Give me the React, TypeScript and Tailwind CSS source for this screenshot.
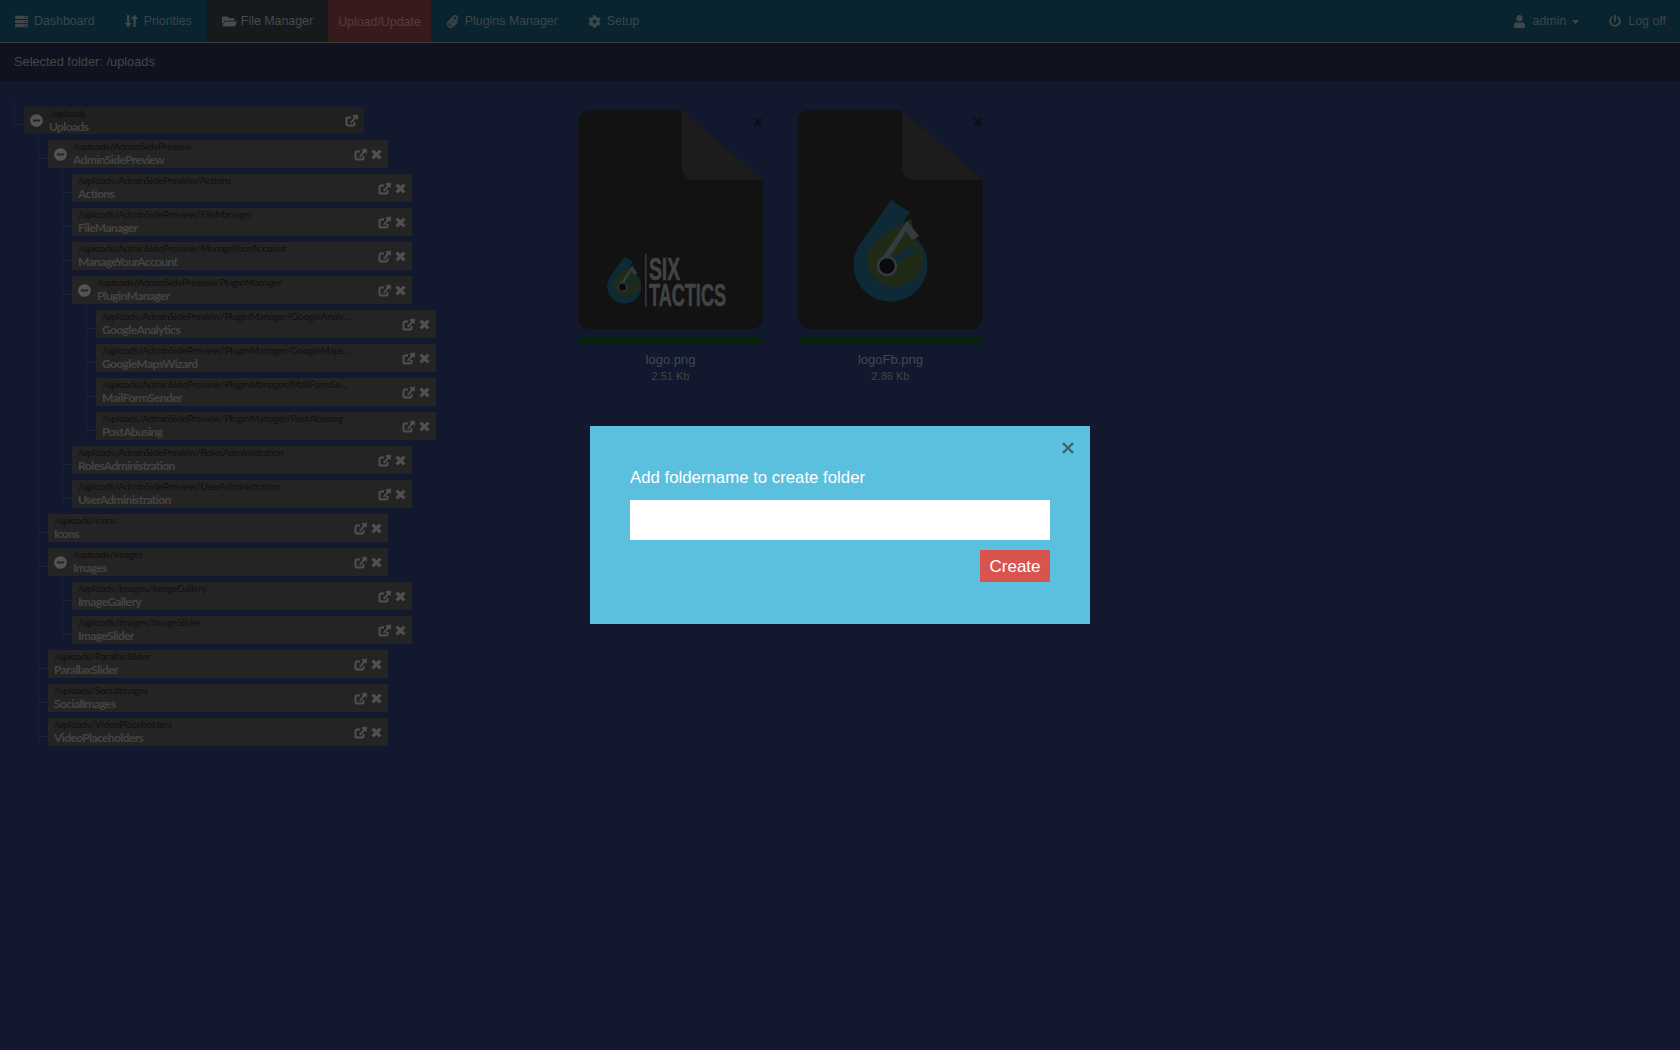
import React from "react";
import { FaServer, FaFolderOpen, FaPaperclip, FaCog, FaUser, FaPowerOff, FaMinusCircle } from "react-icons/fa";

type Node = { name: string; path: string; root?: boolean; kids?: Node[] };

const mk = (path: string, kids?: Node[]): Node => ({ name: path.split("/").pop() as string, path, kids });
const A = "/uploads/AdminSidePreview";
const P = A + "/PluginManager";
const tree: Node = {
  name: "Uploads",
  path: "/uploads",
  root: true,
  kids: [
    mk(A, [
      mk(A + "/Actions"),
      mk(A + "/FileManager"),
      mk(A + "/ManageYourAccount"),
      mk(P, [mk(P + "/GoogleAnalytics"), mk(P + "/GoogleMapsWizard"), mk(P + "/MailFormSender"), mk(P + "/PostAbusing")]),
      mk(A + "/RolesAdministration"),
      mk(A + "/UserAdministration"),
    ]),
    mk("/uploads/Icons"),
    mk("/uploads/Images", [mk("/uploads/Images/ImageGallery"), mk("/uploads/Images/ImageSlider")]),
    mk("/uploads/ParallaxSlider"),
    mk("/uploads/SocialImages"),
    mk("/uploads/VideoPlaceholders"),
  ],
};

function SortIcon() {
  return (
    <svg width="13" height="14" viewBox="0 0 13 14" fill="currentColor" className="mr-[6px]">
      <path d="M2 1h2.4v8H7l-3.8 4.4L-.4 9H2z" />
      <path d="M9.6 .6L13.2 5h-2.4v8H8.4V5H6z" />
    </svg>
  );
}

function ShareIcon() {
  return (
    <svg width="13" height="13" viewBox="0 0 13 13" className="shrink-0 text-[#505050]">
      <path d="M9.5 8v2.2a1.3 1.3 0 0 1-1.3 1.3H2.8a1.3 1.3 0 0 1-1.3-1.3V4.8a1.3 1.3 0 0 1 1.3-1.3H6" fill="none" stroke="currentColor" strokeWidth="2" />
      <path d="M5 8.6 L9 3.4 L7.2 1.6 L12.8 .4 L12.8 6 L10.8 4.6 L6.4 9.6 Z" fill="currentColor" />
    </svg>
  );
}

function CrossIcon() {
  return (
    <svg width="11" height="11" viewBox="0 0 11 11" className="ml-[4px] shrink-0 text-[#505050]">
      <path d="M1.6 1.6 L9.4 9.4 M9.4 1.6 L1.6 9.4" stroke="currentColor" strokeWidth="3.4" strokeLinecap="butt" />
    </svg>
  );
}

function NavItem({ icon, label, active }: { icon?: React.ReactNode; label: string; active?: boolean }) {
  return (
    <div className={"flex h-full items-center px-[15px] " + (active ? "bg-[#161a1c] text-[#474b4c]" : "text-[#3d4648]")}>
      {icon}
      <span>{label}</span>
    </div>
  );
}

function TreeNode({ node, last }: { node: Node; last: boolean }) {
  const hasKids = !!node.kids;
  return (
    <li className="relative pt-[6px]">
      <span className={"absolute left-[-10px] w-px bg-[#1a2238] " + (node.root ? "top-[-1px] h-[25px]" : last ? "top-0 h-[30px]" : "top-0 h-full")} />
      <span className={"absolute left-[-10px] h-px w-[10px] bg-[#1a2238] " + (node.root ? "top-[23px]" : "top-[24px]")} />
      <div className={"flex w-[340px] items-center pr-[6px] " + (node.root ? "h-[27px] bg-[#202020]" : "h-[28px] bg-[#242424]")}>
        {hasKids ? (
          <FaMinusCircle className="ml-[6px] mr-[6px] shrink-0 text-[#545454]" size={13} />
        ) : (
          <span className="w-[6px] shrink-0" />
        )}
        <div className="min-w-0 flex-1 font-['Lato',sans-serif]">
          <div className="w-[250px] truncate text-[10px] leading-[11px] tracking-[-0.24px] text-[#0f0f10]">{node.path}</div>
          <div className="mt-[1px] text-[12px] font-bold leading-[14px] tracking-[-0.6px] text-[#444444]">{node.name}</div>
        </div>
        <ShareIcon />
        {!node.root && <CrossIcon />}
      </div>
      {hasKids && (
        <ul className="pl-[24px]">
          {node.kids!.map((k, i) => (
            <TreeNode key={k.path} node={k} last={i === node.kids!.length - 1} />
          ))}
        </ul>
      )}
    </li>
  );
}

function Drop({ className }: { className?: string }) {
  return (
    <svg viewBox="0 0 80 106" className={className}>
      <path d="M42 1 L61 13 L46 36 L66 38 A37 37 0 1 1 9 48 Z" fill="#0e2a37" />
      <path d="M36 35 C48 28 54 24 62 20 L66 40 A28 28 0 1 1 20 50 Z" fill="#1f2a17" />
      <path d="M31 62 L58 22 L70 37 L63 41 L57 32 L42 56 Z" fill="#353c40" />
      <path d="M44 59 L63 46 L68 52 L47 64 Z" fill="#0e2a37" />
      <circle cx="38" cy="67" r="9" fill="#0b0b0d" stroke="#353c40" strokeWidth="2.5" />
    </svg>
  );
}

function DocSvg({ children }: { children?: React.ReactNode }) {
  return (
    <svg viewBox="0 0 185 219" className="h-[219px] w-[185px]">
      <path d="M12 0 H104 L185 70 V207 A12 12 0 0 1 173 219 H12 A12 12 0 0 1 0 207 V12 A12 12 0 0 1 12 0 Z" fill="#121212" />
      <path d="M104 0 L185 70 H116 A12 12 0 0 1 104 58 Z" fill="#1c1c1c" />
      {children}
    </svg>
  );
}

function Card({ name, size, big }: { name: string; size: string; big?: boolean }) {
  return (
    <div className="relative w-[185px] font-['Liberation_Sans',sans-serif]">
      <DocSvg>
        {!big && (
          <>
            <rect x="67" y="144" width="1.5" height="53" fill="#383838" />
            <text x="71" y="170" fontSize="31" fontWeight="700" fill="#434343" stroke="#434343" strokeWidth="0.6" textLength="31" lengthAdjust="spacingAndGlyphs" fontFamily="Liberation Sans">SIX</text>
            <text x="71" y="196" fontSize="31" fontWeight="700" fill="#434343" stroke="#434343" strokeWidth="0.6" textLength="77" lengthAdjust="spacingAndGlyphs" fontFamily="Liberation Sans">TACTICS</text>
          </>
        )}
      </DocSvg>
      {big ? (
        <Drop className="absolute left-[51px] top-[89px] w-[80px]" />
      ) : (
        <Drop className="absolute left-[27px] top-[146px] w-[37px]" />
      )}
      <span className="absolute right-[1px] top-[3px] text-[15px] font-bold leading-[16px] text-[#0c0c0c]">x</span>
      <div className="mx-[2px] mt-[9px] h-[6px] bg-[#042607]" />
      <div className="mt-[7px] text-center text-[13px] leading-[18px] text-[#414a50]">{name}</div>
      <div className="text-center text-[11px] leading-[15px] text-[#444444]">{size}</div>
    </div>
  );
}

export default function App() {
  return (
    <div className="relative min-h-[1050px] bg-[#12182e] font-['Liberation_Sans',sans-serif]">
      <header className="flex h-[43px] items-stretch justify-between border-b border-[#3a3f3c] bg-[#09242f] text-[12.4px]">
        <nav className="flex h-[42px] items-center">
          <NavItem icon={<FaServer className="mr-[6px]" size={13} />} label="Dashboard" />
          <NavItem icon={<SortIcon />} label="Priorities" />
          <NavItem icon={<FaFolderOpen className="mr-[4px]" size={15} />} label="File Manager" active />
          <div className="flex h-full items-center bg-[#361a1c] px-[10px] pt-[2px] text-[#5a3d3d]">Upload/Update</div>
          <NavItem icon={<FaPaperclip className="mr-[6px]" size={13} />} label="Plugins Manager" />
          <NavItem icon={<FaCog className="mr-[6px]" size={13} />} label="Setup" />
        </nav>
        <div className="flex h-[42px] items-center pr-[14px] text-[#3d4648]">
          <FaUser className="mr-[7px]" size={13} />
          <span>admin</span>
          <svg width="7" height="4" viewBox="0 0 7 4" fill="currentColor" className="ml-[6px] mt-[2px]">
            <path d="M0 0h7L3.5 4z" />
          </svg>
          <FaPowerOff className="ml-[30px] mr-[7px]" size={12} />
          <span>Log off</span>
        </div>
      </header>
      <div className="flex h-[38px] items-center bg-[#10131f] pl-[14px] text-[12.8px] text-[#42474a]">
        Selected folder: /uploads
      </div>
      <main className="flex">
        <ul className="ml-[24px] w-[554px] pt-[20px]">
          <TreeNode node={tree} last />
        </ul>
        <div className="flex gap-[35px] pt-[29px]">
          <Card name="logo.png" size="2.51 Kb" />
          <Card name="logoFb.png" size="2.86 Kb" big />
        </div>
      </main>
      <div className="fixed inset-0 flex items-start justify-center pt-[426px]">
        <div className="relative h-[198px] w-[500px] bg-[#5bc0de] px-[40px] pt-[40px]">
          <svg width="12" height="12" viewBox="0 0 12 12" className="absolute right-[16px] top-[16px] text-[#44606e]">
            <path d="M1 1 L11 11 M11 1 L1 11" stroke="currentColor" strokeWidth="2.4" />
          </svg>
          <h2 className="text-[16.8px] font-normal leading-[24px] text-white">Add foldername to create folder</h2>
          <input className="mt-[10px] block h-[40px] w-full bg-white" />
          <div className="mt-[10px] flex justify-end">
            <button className="h-[32px] w-[70px] bg-[#d9534f] pt-[1px] text-[17px] text-white">Create</button>
          </div>
        </div>
      </div>
    </div>
  );
}
